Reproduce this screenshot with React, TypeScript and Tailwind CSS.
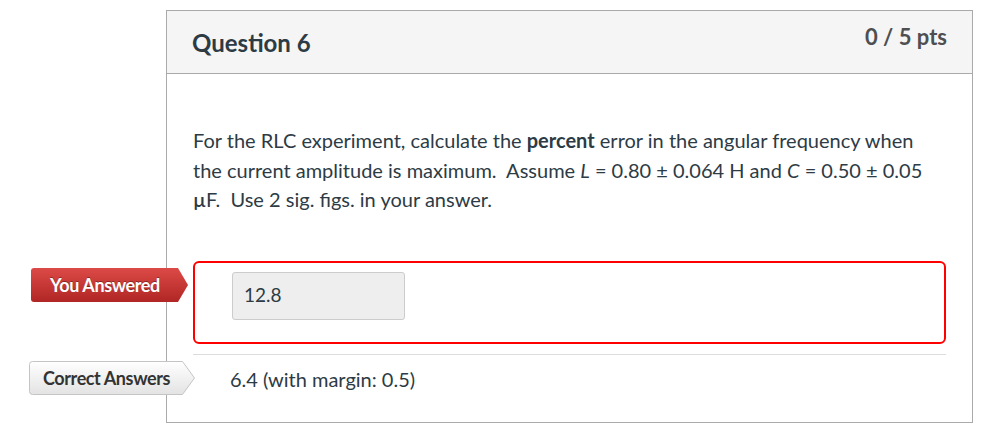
import React from 'react'

const Tag = ({ label, tone }: { label: string; tone: 'red' | 'gray' }) => {
  const red = tone === 'red'
  return (
    <div className={`relative flex items-center h-[34px] ${red ? 'w-[157px] pl-[19px]' : 'w-[166px] pl-[14px]'}`}>
      <svg className="absolute inset-0 w-full h-full" viewBox={red ? '0 0 157 34' : '0 0 166 34'} preserveAspectRatio="none">
        <defs>
          <linearGradient id={`g-${tone}`} x1="0" y1="0" x2="0" y2="1">
            {red ? (
              <>
                <stop offset="0" stopColor="#dc4a47" />
                <stop offset="1" stopColor="#b02624" />
              </>
            ) : (
              <>
                <stop offset="0" stopColor="#ffffff" />
                <stop offset="1" stopColor="#e3e3e3" />
              </>
            )}
          </linearGradient>
        </defs>
        {red ? (
          <path d="M3 0 H147 L157 17 L147 34 H3 Q0 34 0 31 V3 Q0 0 3 0 Z" fill="url(#g-red)" />
        ) : (
          <path d="M3.5 0.5 H153.5 L165.5 17 L153.5 33.5 H3.5 Q0.5 33.5 0.5 30.5 V3.5 Q0.5 0.5 3.5 0.5 Z" fill="url(#g-gray)" stroke="#c4c4c4" />
        )}
      </svg>
      <span
        className={`relative text-[18px] font-bold tracking-[-0.4px] leading-none ${red ? 'text-white [text-shadow:0_-1px_0_rgba(0,0,0,0.35)]' : 'text-[#333]'}`}
      >
        {label}
      </span>
    </div>
  )
}

const App = () => {
  return (
    <div className="w-[1001px] h-[433px] bg-white pl-[166px] pt-[10px] font-['Lato',sans-serif] text-[#2d3b45]">
      <div className="w-[807px] h-[413px] border border-[#aaaaaa] flex flex-col">
        <div className="h-[63px] shrink-0 bg-[#f5f5f5] border-b border-[#aaaaaa] flex justify-between px-[25px]">
          <h2 className="text-[24px] font-bold pt-[20px] leading-none">Question 6</h2>
          <span className="text-[22px] font-bold text-[#4d4f51] pt-[15px] leading-none">0 / 5 pts</span>
        </div>

        <div className="px-[26px] pt-[52px]">
          <p className="text-[20px] leading-[29.5px]">
            For the RLC experiment, calculate the <b>percent</b> error in the angular frequency when the current
            amplitude is maximum.&nbsp; Assume <i>L</i> = 0.80 ± 0.064 H and <i>C</i> = 0.50 ± 0.05{' '}
            <span className="font-semibold">µ</span>F.&nbsp; Use 2 sig. figs. in your answer.
          </p>

          <div className="relative mt-[46px]">
            <div className="absolute left-[-162px] top-[7px]">
              <Tag label="You Answered" tone="red" />
            </div>
            <div className="h-[83px] border-2 border-[#f00] rounded-[6px] pl-[37px] pt-[9px]">
              <div className="w-[173px] h-[48px] bg-[#eeeeee] border border-[#cccccc] rounded-[3px] flex items-center px-[11px] text-[19px]">
                12.8
              </div>
            </div>
          </div>

          <div className="mt-[10px] border-t border-[#dddddd] relative pt-[9px]">
            <div className="absolute left-[-164px] top-[6px]">
              <Tag label="Correct Answers" tone="gray" />
            </div>
            <p className="pl-[37px] text-[20px] leading-[30px]">6.4 (with margin: 0.5)</p>
          </div>
        </div>
      </div>
    </div>
  )
}

export default App
